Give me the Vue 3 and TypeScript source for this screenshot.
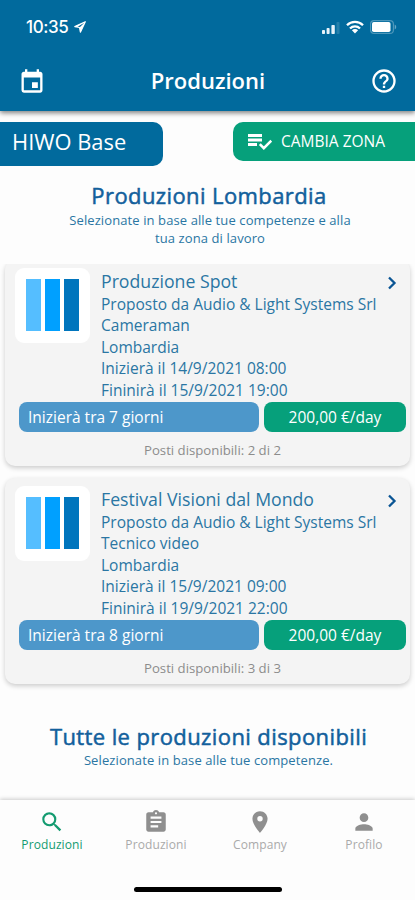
<script setup lang="ts">
interface Production {
  title: string
  rows: string[]
  start: string
  pay: string
  seats: string
}

interface Tab {
  label: string
  icon: string
  active?: boolean
}

const productions: Production[] = [
  {
    title: 'Produzione Spot',
    rows: ['Proposto da Audio & Light Systems Srl', 'Cameraman', 'Lombardia', 'Inizierà il 14/9/2021 08:00', 'Fininirà il 15/9/2021 19:00'],
    start: 'Inizierà tra 7 giorni',
    pay: '200,00 €/day',
    seats: 'Posti disponibili: 2 di 2',
  },
  {
    title: 'Festival Visioni dal Mondo',
    rows: ['Proposto da Audio & Light Systems Srl', 'Tecnico video', 'Lombardia', 'Inizierà il 15/9/2021 09:00', 'Fininirà il 19/9/2021 22:00'],
    start: 'Inizierà tra 8 giorni',
    pay: '200,00 €/day',
    seats: 'Posti disponibili: 3 di 3',
  },
]

const tabs: Tab[] = [
  {
    label: 'Produzioni',
    active: true,
    icon: 'M15.5 14h-.79l-.28-.27A6.47 6.47 0 0 0 16 9.5 6.5 6.5 0 1 0 9.5 16c1.61 0 3.09-.59 4.23-1.57l.27.28v.79l5 4.99L20.49 19l-4.99-5zm-6 0C7.01 14 5 11.99 5 9.5S7.01 5 9.5 5 14 7.01 14 9.5 11.99 14 9.5 14z',
  },
  {
    label: 'Produzioni',
    icon: 'M19 3h-4.18C14.4 1.84 13.3 1 12 1s-2.4.84-2.82 2H5c-1.1 0-2 .9-2 2v14c0 1.1.9 2 2 2h14c1.1 0 2-.9 2-2V5c0-1.1-.9-2-2-2zm-7 0c.55 0 1 .45 1 1s-.45 1-1 1-1-.45-1-1 .45-1 1-1zm2 14H7v-2h7v2zm3-4H7v-2h10v2zm0-4H7V7h10v2z',
  },
  {
    label: 'Company',
    icon: 'M12 2C8.13 2 5 5.13 5 9c0 5.25 7 13 7 13s7-7.75 7-13c0-3.87-3.13-7-7-7zm0 9.5a2.5 2.5 0 0 1 0-5 2.5 2.5 0 0 1 0 5z',
  },
  {
    label: 'Profilo',
    icon: 'M12 12c2.21 0 4-1.79 4-4s-1.79-4-4-4-4 1.79-4 4 1.79 4 4 4zm0 2c-2.67 0-8 1.34-8 4v2h16v-2c0-2.66-5.33-4-8-4z',
  },
]
</script>

<template>
  <div class="screen">
    <header class="header">
      <div class="status">
        <span class="time">10:35</span>
        <svg class="location" viewBox="0 0 12 12"><path d="M11.3.7.8 5.6l4.7.9.9 4.7z" fill="none" stroke="#fff" stroke-width="1.2" stroke-linejoin="round" /><path d="M11.3.7 5.5 6.5l.9 4.7zM11.3.7.8 5.6l2.5.4z" fill="#fff" /></svg>
        <span class="spacer"></span>
        <svg class="signal" viewBox="0 0 18 12"><g fill="#e8f3fa"><rect x="0" y="8" width="3" height="4" rx=".8" /><rect x="4.6" y="6" width="3" height="6" rx=".8" /><rect x="9.4" y="3" width="3.4" height="9" rx=".8" /></g><rect x="14.5" y="0" width="3" height="12" rx=".8" fill="#fff" opacity=".15" /></svg>
        <svg class="wifi" viewBox="0 0 18 14"><g fill="none" stroke="#fff" stroke-width="2.3"><path d="M1 5.2C5.4.8 12.6.8 17 5.2" /><path d="M4 8.5c2.8-2.8 7.2-2.8 10 0" /></g><path d="M5.9 10.2c1.8-1.5 4.4-1.5 6.2 0L9 13.5z" fill="#fff" /></svg>
        <svg class="battery" viewBox="0 0 27 14"><rect x=".6" y=".6" width="22.8" height="12.8" rx="3.5" fill="none" stroke="#fff" stroke-opacity=".3" stroke-width="1.2" /><rect x="2" y="2" width="18.5" height="10" rx="1.8" fill="#fff" /><path d="M24.7 4.5c2 .8 2 4.2 0 5z" fill="#fff" opacity=".4" /></svg>
      </div>
      <div class="bar">
        <svg class="icon" viewBox="0 0 24 24"><path fill="#fff" d="M19 4h-1V2h-2v2H8V2H6v2H5c-1.11 0-1.99.9-1.99 2L3 20a2 2 0 0 0 2 2h14c1.1 0 2-.9 2-2V6c0-1.1-.9-2-2-2zm0 16H5V9h14v11zm-7-7h5v5h-5z" /></svg>
        <h1>Produzioni</h1>
        <svg class="icon" viewBox="0 0 24 24"><path fill="#fff" d="M11 18h2v-2h-2v2zm1-16a10 10 0 1 0 0 20 10 10 0 0 0 0-20zm0 18c-4.41 0-8-3.59-8-8s3.59-8 8-8 8 3.59 8 8-3.59 8-8 8zm0-14a4 4 0 0 0-4 4h2c0-1.1.9-2 2-2s2 .9 2 2c0 2-3 1.75-3 5h2c0-2.25 3-2.5 3-5a4 4 0 0 0-4-4z" /></svg>
      </div>
    </header>

    <div class="actions">
      <div class="plan">HIWO Base</div>
      <button class="zone">
        <svg viewBox="0 0 24 16"><path d="M0 1.5h14M0 6h14M0 10.5h9" stroke="#fff" stroke-width="2.8" fill="none" /><path d="M11.8 10.2l4 4L23.3 6.7" stroke="#fff" stroke-width="2.6" fill="none" /></svg>
        <span>CAMBIA ZONA</span>
      </button>
    </div>

    <section class="intro">
      <h2>Produzioni Lombardia</h2>
      <p>Selezionate in base alle tue competenze e alla<br />tua zona di lavoro</p>
    </section>

    <main class="list">
      <article v-for="item in productions" :key="item.title" class="card">
        <div class="top">
          <div class="logo"><i class="light"></i><i class="mid"></i><i class="dark"></i></div>
          <div class="info">
            <h3>{{ item.title }}</h3>
            <p v-for="row in item.rows" :key="row">{{ row }}</p>
          </div>
          <svg class="chevron" viewBox="0 0 10 14"><path d="M2 1.5 7.5 7 2 12.5" fill="none" stroke="#0a5594" stroke-width="2.3" /></svg>
        </div>
        <div class="badges">
          <span class="start">{{ item.start }}</span>
          <span class="pay">{{ item.pay }}</span>
        </div>
        <p class="seats">{{ item.seats }}</p>
      </article>
    </main>

    <section class="all">
      <h2>Tutte le produzioni disponibili</h2>
      <p>Selezionate in base alle tue competenze.</p>
    </section>

    <nav class="tabs">
      <div class="tab-row">
        <div v-for="(tab, i) in tabs" :key="i" class="tab" :class="{ active: tab.active }">
          <svg viewBox="0 0 24 24"><path :d="tab.icon" fill="currentColor" /></svg>
          <span>{{ tab.label }}</span>
        </div>
      </div>
      <div class="home"></div>
    </nav>
  </div>
</template>

<style>
body {
  margin: 0;
  background: #fdfdfd;
}
</style>

<style scoped>
* {
  box-sizing: border-box;
}
h1, h2, h3, p {
  margin: 0;
}
.screen {
  display: flex;
  flex-direction: column;
  width: 415px;
  height: 900px;
  overflow: hidden;
  background: #fdfdfd;
  color: #2a76a3;
  font-family: 'Open Sans', 'Noto Sans', sans-serif;
  white-space: nowrap;
}
.header {
  height: 111px;
  flex: none;
  background: #016a9d;
  box-shadow: 0 2px 5px rgba(0, 0, 0, 0.5);
  color: #fff;
}
.status {
  display: flex;
  align-items: center;
  height: 54px;
  padding: 0 18px 0 26px;
}
.time {
  font: 500 17px/20px Inter, sans-serif;
  letter-spacing: -0.4px;
}
.location {
  width: 12px;
  height: 12px;
  margin-left: 6px;
}
.spacer {
  flex: 1;
}
.signal {
  width: 18px;
  height: 12px;
  margin-top: 2px;
}
.wifi {
  width: 18px;
  height: 14px;
  margin-left: 6px;
}
.battery {
  width: 27px;
  height: 14px;
  margin-left: 6px;
}
.bar {
  display: flex;
  align-items: center;
  justify-content: space-between;
  height: 54px;
  padding: 0 17px 0 18px;
}
.icon {
  width: 28px;
  height: 28px;
}
h1 {
  margin-bottom: 2px;
  font-size: 22px;
  font-weight: 600;
  line-height: 30px;
}
.actions {
  display: flex;
  justify-content: space-between;
  align-items: flex-start;
  height: 55px;
  padding-top: 11px;
  flex: none;
  color: #fff;
}
.plan {
  width: 163px;
  height: 44px;
  padding-left: 12px;
  border-radius: 0 10px 10px 0;
  background: #016a9d;
  font-size: 21.9px;
  line-height: 40px;
}
.zone {
  display: flex;
  align-items: center;
  width: 182px;
  height: 39px;
  padding: 0 0 2px 15px;
  border: 0;
  border-radius: 10px 0 0 10px;
  background: #06a07b;
  color: #fff;
  font: 400 15.5px/36px 'Open Sans', sans-serif;
}
.zone svg {
  width: 24px;
  height: 16px;
  margin: 3px 9px 0 0;
}
.intro {
  height: 98px;
  flex: none;
  padding: 14px 0 0 3px;
  text-align: center;
}
h2 {
  color: #12609c;
  font-size: 22px;
  font-weight: 400;
  line-height: 30px;
  letter-spacing: 0.4px;
  -webkit-text-stroke: 0.5px #12609c;
}
.intro h2 {
  margin-bottom: 1px;
}
.intro p, .all p {
  font-size: 13px;
  line-height: 18px;
  letter-spacing: 0.1px;
}
.intro p {
  padding-left: 2px;
}
.list {
  height: 436px;
  flex: none;
  overflow: hidden;
}
.card {
  width: 405px;
  height: 206px;
  margin: 0 5px 12px;
  border-radius: 10px;
  background: #f4f4f4;
  box-shadow: 0 2px 5px rgba(0, 0, 0, 0.2);
}
.card:first-child {
  margin-top: -4px;
}
.top {
  display: flex;
  height: 142px;
  padding: 8px 13px 0 10px;
}
.logo {
  display: flex;
  gap: 4px;
  width: 75px;
  height: 75px;
  padding: 11px;
  border-radius: 9px;
  background: #fff;
}
.logo i {
  width: 15px;
  height: 52px;
}
.light {
  background: #55beff;
}
.mid {
  background: #00a0ff;
}
.dark {
  background: #0075bd;
}
.info {
  flex: 1;
  margin-left: 11px;
  padding-top: 1px;
}
h3 {
  font-size: 17.7px;
  font-weight: 400;
  line-height: 25px;
  height: 25px;
}
.info p {
  height: 21.4px;
  font-size: 15.5px;
  line-height: 21.4px;
}
.chevron {
  width: 10px;
  height: 14px;
  margin-top: 8px;
  flex: none;
}
.badges {
  display: flex;
  gap: 5px;
  padding: 0 4px 0 14px;
  color: #fff;
  font-size: 15.5px;
  line-height: 31px;
}
.start {
  width: 240px;
  height: 30px;
  padding-left: 9px;
  border-radius: 8px;
  background: #4d97ca;
}
.pay {
  width: 142px;
  height: 30px;
  border-radius: 8px;
  background: #06a07b;
  text-align: center;
}
.seats {
  margin-top: 8px;
  padding-left: 10px;
  color: #8c8c8c;
  font-size: 13.2px;
  line-height: 20px;
  text-align: center;
}
.all {
  flex: 1;
  padding: 21px 0 0 2px;
  text-align: center;
}
.tabs {
  height: 100px;
  flex: none;
  background: #fdfdfd;
  box-shadow: 0 -1px 4px rgba(0, 0, 0, 0.2);
}
.tab-row {
  display: grid;
  grid-template-columns: repeat(4, 104px);
  height: 89px;
  padding-top: 9px;
}
.tab {
  display: flex;
  flex-direction: column;
  align-items: center;
  color: #8f8f8f;
  font-size: 12px;
  line-height: 19px;
  letter-spacing: 0.1px;
}
.tab svg {
  width: 26px;
  height: 26px;
}
.tab span {
  color: #aaa;
}
.tab.active, .tab.active span {
  color: #139b70;
}
.home {
  width: 148px;
  height: 5px;
  margin: -2px auto 0;
  border-radius: 3px;
  background: #000;
}
</style>
